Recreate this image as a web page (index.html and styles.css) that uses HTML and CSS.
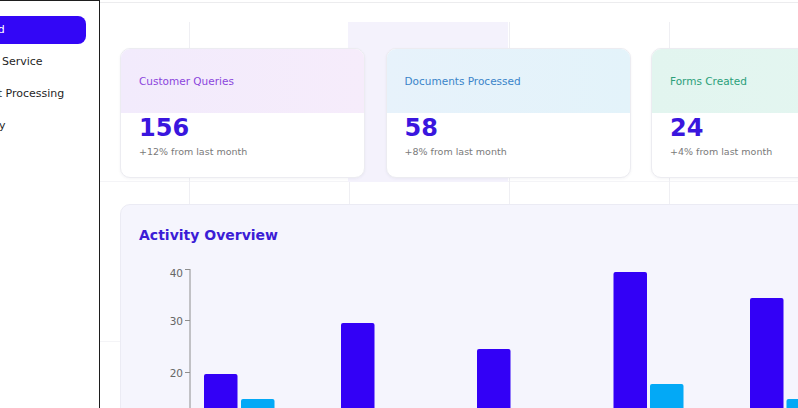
FILE: index.html
```html
<!DOCTYPE html>
<html lang="en">
<head>
<meta charset="utf-8">
<title>Dashboard</title>
<link rel="stylesheet" href="styles.css">
</head>
<body>
<div class="app">
  <aside class="sidebar">
    <nav class="nav">
      <a class="nav-item active">Dashboard</a>
      <a class="nav-item">Customer Service</a>
      <a class="nav-item">Document Processing</a>
      <a class="nav-item">My Activity</a>
    </nav>
  </aside>
  <main class="main">
    <div class="topbar"></div>
    <div class="canvas">
      <div class="content">
        <div class="stats">
          <div class="card">
            <div class="card-head head-purple"><span class="card-title title-purple">Customer Queries</span></div>
            <div class="card-body">
              <div class="card-value">156</div>
              <div class="card-sub">+12% from last month</div>
            </div>
          </div>
          <div class="card">
            <div class="card-head head-blue"><span class="card-title title-blue">Documents Processed</span></div>
            <div class="card-body">
              <div class="card-value">58</div>
              <div class="card-sub">+8% from last month</div>
            </div>
          </div>
          <div class="card">
            <div class="card-head head-green"><span class="card-title title-green">Forms Created</span></div>
            <div class="card-body">
              <div class="card-value">24</div>
              <div class="card-sub">+4% from last month</div>
            </div>
          </div>
        </div>
        <section class="activity">
          <h2 class="activity-title">Activity Overview</h2>
          <svg class="chart" width="760" height="160" viewBox="0 0 760 160">
            <g class="axis">
              <line x1="51" y1="15" x2="51" y2="222"/>
              <line x1="46" y1="15.5" x2="51" y2="15.5"/>
              <line x1="46" y1="66.5" x2="51" y2="66.5"/>
              <line x1="46" y1="118.5" x2="51" y2="118.5"/>
            </g>
            <g class="ticks">
              <text x="44" y="19">40</text>
              <text x="44" y="67">30</text>
              <text x="44" y="119">20</text>
            </g>
            <g class="bars-a">
              <rect x="65" y="120" width="33.5" height="110" rx="2"/>
              <rect x="202" y="69" width="33.5" height="160" rx="2"/>
              <rect x="338" y="95" width="33.5" height="140" rx="2"/>
              <rect x="474.5" y="18" width="33.5" height="210" rx="2"/>
              <rect x="611" y="44" width="33.5" height="190" rx="2"/>
            </g>
            <g class="bars-b">
              <rect x="102" y="145" width="33.5" height="90" rx="2"/>
              <rect x="511" y="130" width="33.5" height="100" rx="2"/>
              <rect x="647.5" y="145" width="33.5" height="90" rx="2"/>
            </g>
          </svg>
        </section>
      </div>
    </div>
  </main>
</div>
</body>
</html>
```
FILE: styles.css
```css
* { box-sizing: border-box; }

html, body {
  margin: 0;
  padding: 0;
  height: 408px;
  overflow: hidden;
  background: #ffffff;
  font-family: "DejaVu Sans", "Liberation Sans", sans-serif;
}

.app {
  display: flex;
  height: 408px;
}

.sidebar {
  flex: none;
  width: 100px;
  height: 100%;
  border-top: 1px solid #1e1e1e;
  border-right: 1px solid #1e1e1e;
  background: #ffffff;
  overflow: hidden;
}

.nav {
  display: flex;
  flex-direction: column;
  gap: 4px;
  padding-top: 15px;
}

.nav-item {
  display: block;
  width: 155px;
  height: 28px;
  margin-left: -69px;
  padding-left: 14px;
  line-height: 28px;
  font-size: 11px;
  color: #1f1f1f;
  white-space: nowrap;
  border-radius: 8px;
}

.nav-item.active {
  background: #3306f6;
  color: #ffffff;
}

.main {
  flex: 1;
  min-width: 0;
  height: 100%;
  overflow: hidden;
}

.topbar {
  height: 3px;
  border-bottom: 1px solid #ececee;
}

.canvas {
  margin-top: 19px;
  height: 400px;
  padding: 26px 0 0 20px;
  background-image:
    linear-gradient(#f4f2fc, #f4f2fc),
    linear-gradient(to right, #efeff3 1px, transparent 1px),
    linear-gradient(to bottom, #f4f4f7 1px, transparent 1px);
  background-size: 160px 160px, 160px 160px, 160px 160px;
  background-position: 248px 0, 89px 0, 0 159px;
  background-repeat: no-repeat, repeat, repeat;
}

.content {
  width: 777px;
}

.stats {
  display: flex;
  gap: 20.5px;
}

.card {
  flex: none;
  width: 245px;
  height: 130px;
  border: 1px solid #ececf1;
  border-radius: 10px;
  background: #ffffff;
  overflow: hidden;
  box-shadow: 0 1px 3px rgba(40, 40, 80, 0.05);
}

.card-head {
  height: 64px;
  display: flex;
  align-items: center;
  padding: 0 18px 1px;
}

.head-purple { background: linear-gradient(90deg, #f2ebfc, #f6ecfb); }
.head-blue { background: linear-gradient(90deg, #e7f2fb, #e3f3fa); }
.head-green { background: linear-gradient(90deg, #e2f5ef, #e4f6f1); }

.card-title {
  font-size: 10.5px;
  line-height: 14px;
}

.title-purple { color: #8b45dc; }
.title-blue { color: #3a84c9; }
.title-green { color: #2ba07a; }

.card-body {
  padding: 1px 18px 0;
}

.card-value {
  font-size: 24px;
  font-weight: bold;
  line-height: 28px;
  color: #3a16de;
}

.card-sub {
  margin-top: 3px;
  font-size: 9.5px;
  line-height: 14px;
  color: #7a7a7a;
}

.activity {
  margin-top: 26px;
  height: 260px;
  padding: 20px 18px 0 18px;
  border: 1px solid #ebebf4;
  border-radius: 10px;
  background: #f5f5fd;
}

.activity-title {
  margin: 0;
  font-size: 14px;
  line-height: 20px;
  font-weight: bold;
  color: #3b1dd6;
}

.chart {
  display: block;
  margin-top: 9px;
  overflow: visible;
}

.axis line {
  stroke: #8e8e8e;
  stroke-width: 1;
}

.ticks text {
  font-family: "DejaVu Sans", sans-serif;
  font-size: 10.5px;
  fill: #666666;
  text-anchor: end;
  dominant-baseline: central;
}

.bars-a rect { fill: #3300f6; }
.bars-b rect { fill: #03a9f6; }
```
